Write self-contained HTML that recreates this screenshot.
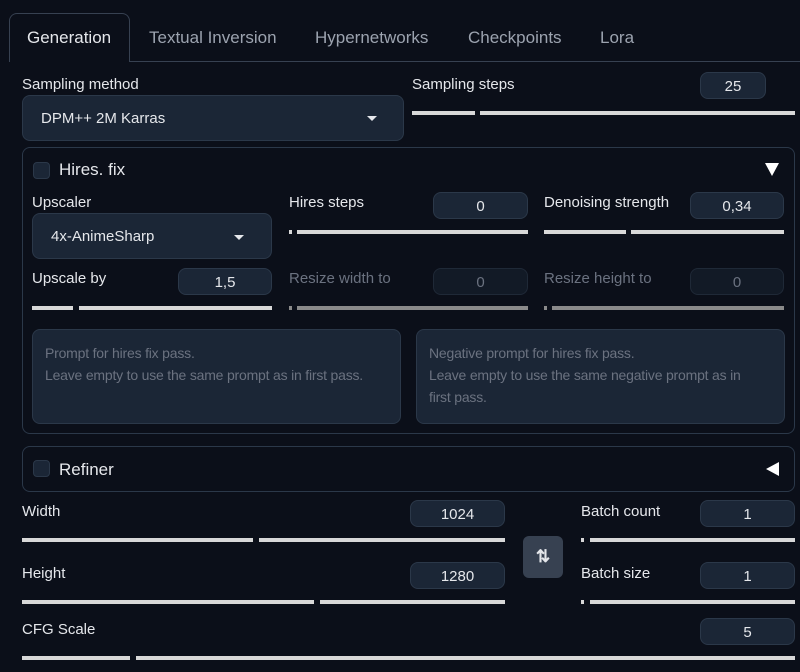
<!DOCTYPE html>
<html><head><meta charset="utf-8"><style>
*{box-sizing:border-box;margin:0;padding:0}
body{width:800px;height:672px;background:#0b0f19;font-family:"Liberation Sans",sans-serif;color:#e5e7eb;position:relative;overflow:hidden}
.a{position:absolute}
.t{position:absolute;font-size:15px;line-height:18px;white-space:nowrap}
.tab{position:absolute;top:28px;font-size:17px;color:#9ca3af;line-height:20px}
.box{position:absolute;background:#1b2636;border:1px solid #2b3849;border-radius:8px;font-size:15px;text-align:center;line-height:27px;color:#e5e7eb}
.dim{color:#6b7280}
.bar{position:absolute;height:4px;background:#d8d8d8}
.dbar{position:absolute;height:4px;background:#8a8a8a}
.panel{position:absolute;border:1px solid #2b3849;border-radius:8px}
.cb{position:absolute;width:17px;height:17px;background:#1b2636;border:1px solid #2b3849;border-radius:4px}
.dd{position:absolute;background:#1b2636;border:1px solid #2b3849;border-radius:8px;font-size:15px;color:#e5e7eb}
.ta{position:absolute;background:#1b2636;border:1px solid #2b3849;border-radius:8px;font-size:14px;letter-spacing:-0.2px;color:#6b7280;line-height:22px;padding:12px 8px 12px 12px}
.caret{position:absolute;width:0;height:0;border-left:5px solid transparent;border-right:5px solid transparent;border-top:5px solid #e5e7eb}
</style></head><body>
<div class="a" style="left:9px;top:13px;width:121px;height:49px;border:1px solid #374151;border-bottom:none;border-radius:8px 8px 0 0;background:#0b0f19;z-index:2"></div>
<div class="a" style="left:129px;top:61px;width:671px;height:1px;background:#374151"></div>
<div class="tab" style="left:27px;color:#e5e7eb;z-index:3">Generation</div>
<div class="tab" style="left:149px">Textual Inversion</div>
<div class="tab" style="left:315px">Hypernetworks</div>
<div class="tab" style="left:468px">Checkpoints</div>
<div class="tab" style="left:600px">Lora</div>

<div class="t" style="left:22px;top:76px">Sampling method</div>
<div class="dd" style="left:22px;top:95px;width:382px;height:46px"><span class="a" style="left:18px;top:14px">DPM++ 2M Karras</span><div class="caret" style="left:344px;top:20px"></div></div>
<div class="t" style="left:412px;top:76px">Sampling steps</div>
<div class="box" style="left:700px;top:72px;width:66px;height:27px">25</div>
<div class="bar" style="left:412px;top:111px;width:63px"></div><div class="bar" style="left:480px;top:111px;width:315px"></div>

<div class="panel" style="left:22px;top:147px;width:773px;height:287px"></div>
<div class="cb" style="left:33px;top:162px"></div>
<div class="t" style="left:59px;top:160px;font-size:17px;line-height:20px">Hires. fix</div>
<div class="a" style="left:765px;top:163px;width:0;height:0;border-left:7px solid transparent;border-right:7px solid transparent;border-top:13px solid #fff"></div>

<div class="t" style="left:32px;top:194px">Upscaler</div>
<div class="dd" style="left:32px;top:213px;width:240px;height:46px"><span class="a" style="left:18px;top:14px">4x-AnimeSharp</span><div class="caret" style="left:201px;top:21px"></div></div>
<div class="t" style="left:289px;top:194px">Hires steps</div>
<div class="box" style="left:433px;top:192px;width:95px;height:27px">0</div>
<div class="bar" style="left:289px;top:230px;width:3px"></div><div class="bar" style="left:297px;top:230px;width:231px"></div>
<div class="t" style="left:544px;top:194px">Denoising strength</div>
<div class="box" style="left:690px;top:192px;width:94px;height:27px">0,34</div>
<div class="bar" style="left:544px;top:230px;width:82px"></div><div class="bar" style="left:631px;top:230px;width:153px"></div>

<div class="t" style="left:32px;top:270px">Upscale by</div>
<div class="box" style="left:178px;top:268px;width:94px;height:27px">1,5</div>
<div class="bar" style="left:32px;top:306px;width:41px"></div><div class="bar" style="left:79px;top:306px;width:193px"></div>
<div class="t dim" style="left:289px;top:270px">Resize width to</div>
<div class="box dim" style="left:433px;top:268px;width:95px;height:27px;background:#121a26;border-color:#1f2937">0</div>
<div class="dbar" style="left:289px;top:306px;width:3px"></div><div class="dbar" style="left:297px;top:306px;width:231px"></div>
<div class="t dim" style="left:544px;top:270px">Resize height to</div>
<div class="box dim" style="left:690px;top:268px;width:94px;height:27px;background:#121a26;border-color:#1f2937">0</div>
<div class="dbar" style="left:544px;top:306px;width:3px"></div><div class="dbar" style="left:552px;top:306px;width:232px"></div>

<div class="ta" style="left:32px;top:329px;width:369px;height:95px">Prompt for hires fix pass.<br><span style="white-space:nowrap">Leave empty to use the same prompt as in first pass.</span></div>
<div class="ta" style="left:416px;top:329px;width:369px;height:95px">Negative prompt for hires fix pass.<br><span style="white-space:nowrap">Leave empty to use the same negative prompt as in</span><br>first pass.</div>

<div class="panel" style="left:22px;top:446px;width:773px;height:46px"></div>
<div class="cb" style="left:33px;top:460px"></div>
<div class="t" style="left:59px;top:460px;font-size:17px;line-height:20px">Refiner</div>
<div class="a" style="left:766px;top:462px;width:0;height:0;border-top:7px solid transparent;border-bottom:7px solid transparent;border-right:13px solid #fff"></div>

<div class="t" style="left:22px;top:503px">Width</div>
<div class="box" style="left:410px;top:500px;width:95px;height:27px">1024</div>
<div class="bar" style="left:22px;top:538px;width:231px"></div><div class="bar" style="left:259px;top:538px;width:246px"></div>
<div class="a" style="left:523px;top:536px;width:40px;height:42px;background:#374151;border-radius:6px;color:#e5e7eb;font-size:17px;text-align:center;line-height:42px;font-weight:bold">⇅</div>
<div class="t" style="left:581px;top:503px">Batch count</div>
<div class="box" style="left:700px;top:500px;width:95px;height:27px">1</div>
<div class="bar" style="left:581px;top:538px;width:3px"></div><div class="bar" style="left:590px;top:538px;width:205px"></div>

<div class="t" style="left:22px;top:565px">Height</div>
<div class="box" style="left:410px;top:562px;width:95px;height:27px">1280</div>
<div class="bar" style="left:22px;top:600px;width:292px"></div><div class="bar" style="left:320px;top:600px;width:185px"></div>
<div class="t" style="left:581px;top:565px">Batch size</div>
<div class="box" style="left:700px;top:562px;width:95px;height:27px">1</div>
<div class="bar" style="left:581px;top:600px;width:3px"></div><div class="bar" style="left:590px;top:600px;width:205px"></div>

<div class="t" style="left:22px;top:621px">CFG Scale</div>
<div class="box" style="left:700px;top:618px;width:95px;height:27px">5</div>
<div class="bar" style="left:22px;top:656px;width:108px"></div><div class="bar" style="left:136px;top:656px;width:659px"></div>
</body></html>
